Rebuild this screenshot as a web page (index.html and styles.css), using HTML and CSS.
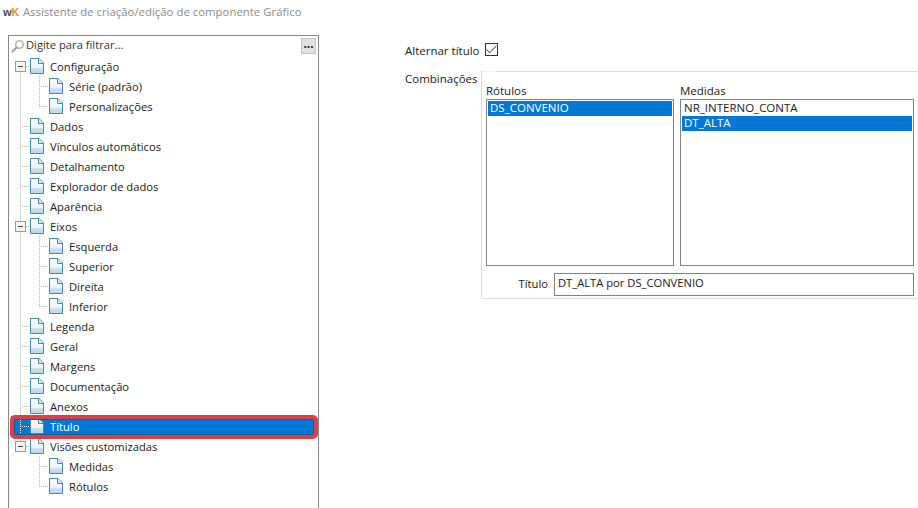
FILE: index.html
```html
<!DOCTYPE html>
<html lang="pt">
<head>
<meta charset="utf-8">
<title>Assistente de criação/edição de componente Gráfico</title>
<link rel="stylesheet" href="styles.css">
</head>
<body>
<svg class="defs" width="0" height="0" aria-hidden="true">
  <defs>
    <linearGradient id="docfill" x1="0" y1="0" x2="0" y2="1">
      <stop offset="0" stop-color="#ffffff"/>
      <stop offset="0.6" stop-color="#eaf4f9"/>
      <stop offset="0.68" stop-color="#c9dfeb"/>
      <stop offset="1" stop-color="#bcd7e6"/>
    </linearGradient>
    <symbol id="doc" viewBox="0 0 14 16">
      <path d="M.5.5H9L13.5 5V15.5H.5Z" fill="url(#docfill)" stroke="#3f8cab"/>
      <path d="M8.5 1V5.5H13" fill="#ddebf2" stroke="#3f8cab"/>
    </symbol>
  </defs>
</svg>
<header class="titlebar">
  <span class="logo"><b class="logo-w">w</b><b class="logo-k">K</b></span>
  <span class="title">Assistente de criação/edição de componente Gráfico</span>
</header>
<main class="content">
  <aside class="tree-panel">
    <div class="filter">
      <svg class="search" width="14" height="14" viewBox="0 0 14 14"><circle cx="8.5" cy="5.5" r="3.8" fill="none" stroke="#b4b4b4" stroke-width="1.6"/><path d="M5.6 8.4 1.5 12.5" stroke="#a8a8a8" stroke-width="2.2" stroke-linecap="round"/></svg>
      <span class="filter-text">Digite para filtrar...</span>
      <button class="more" type="button">...</button>
    </div>
    <ul class="tree">
      <li><div class="node"><i class="exp"></i><svg class="doc"><use href="#doc"/></svg><span>Configuração</span></div>
        <ul class="sub">
          <li><div class="node"><svg class="doc"><use href="#doc"/></svg><span>Série (padrão)</span></div></li>
          <li><div class="node"><svg class="doc"><use href="#doc"/></svg><span>Personalizações</span></div></li>
        </ul></li>
      <li><div class="node"><svg class="doc"><use href="#doc"/></svg><span>Dados</span></div></li>
      <li><div class="node"><svg class="doc"><use href="#doc"/></svg><span>Vínculos automáticos</span></div></li>
      <li><div class="node"><svg class="doc"><use href="#doc"/></svg><span>Detalhamento</span></div></li>
      <li><div class="node"><svg class="doc"><use href="#doc"/></svg><span>Explorador de dados</span></div></li>
      <li><div class="node"><svg class="doc"><use href="#doc"/></svg><span>Aparência</span></div></li>
      <li><div class="node"><i class="exp"></i><svg class="doc"><use href="#doc"/></svg><span>Eixos</span></div>
        <ul class="sub">
          <li><div class="node"><svg class="doc"><use href="#doc"/></svg><span>Esquerda</span></div></li>
          <li><div class="node"><svg class="doc"><use href="#doc"/></svg><span>Superior</span></div></li>
          <li><div class="node"><svg class="doc"><use href="#doc"/></svg><span>Direita</span></div></li>
          <li><div class="node"><svg class="doc"><use href="#doc"/></svg><span>Inferior</span></div></li>
        </ul></li>
      <li><div class="node"><svg class="doc"><use href="#doc"/></svg><span>Legenda</span></div></li>
      <li><div class="node"><svg class="doc"><use href="#doc"/></svg><span>Geral</span></div></li>
      <li><div class="node"><svg class="doc"><use href="#doc"/></svg><span>Margens</span></div></li>
      <li><div class="node"><svg class="doc"><use href="#doc"/></svg><span>Documentação</span></div></li>
      <li><div class="node"><svg class="doc"><use href="#doc"/></svg><span>Anexos</span></div></li>
      <li class="selected"><div class="node"><svg class="doc"><use href="#doc"/></svg><span>Título</span></div><div class="callout"></div></li>
      <li><div class="node"><i class="exp"></i><svg class="doc"><use href="#doc"/></svg><span>Visões customizadas</span></div>
        <ul class="sub">
          <li><div class="node"><svg class="doc"><use href="#doc"/></svg><span>Medidas</span></div></li>
          <li><div class="node"><svg class="doc"><use href="#doc"/></svg><span>Rótulos</span></div></li>
        </ul></li>
    </ul>
  </aside>
  <section class="form">
    <div class="toggle-row">
      <span class="label">Alternar título</span>
      <span class="check"><svg width="11" height="9" viewBox="0 0 11 9"><path d="M.7 4.5 3.8 7.8 10.3 .8" fill="none" stroke="#333" stroke-width="1"/></svg></span>
    </div>
    <div class="combo-row">
      <span class="label combo-label">Combinações</span>
      <div class="group">
        <div class="lists">
          <div class="list-col rotulos">
            <div class="list-title">Rótulos</div>
            <div class="listbox"><div class="item sel">DS_CONVENIO</div></div>
          </div>
          <div class="list-col medidas">
            <div class="list-title">Medidas</div>
            <div class="listbox"><div class="item">NR_INTERNO_CONTA</div><div class="item sel">DT_ALTA</div></div>
          </div>
        </div>
        <div class="title-row">
          <span class="label">Título</span>
          <div class="input">DT_ALTA por DS_CONVENIO</div>
        </div>
      </div>
    </div>
  </section>
</main>
</body>
</html>
```
FILE: styles.css
```css
* { box-sizing: border-box; }
html, body { margin: 0; height: 100%; }
body {
  width: 918px; height: 508px; overflow: hidden; background: #fff;
  font-family: "Open Sans", "Noto Sans", sans-serif; font-size: 11.2px; color: #1a1a1a;
  display: flex; flex-direction: column;
}
.defs { position: absolute; }
.titlebar { height: 35px; padding: 4px 0 0 3px; display: flex; align-items: flex-start; gap: 4px; flex: none; line-height: 16px; }
.logo { font-size: 11px; letter-spacing: -.3px; font-family: "Liberation Sans", sans-serif; }
.logo-w { color: #4a4a4a; }
.logo-k { color: #e8892c; }
.title { color: #8c8c8c; font-size: 11.4px; }
.content { flex: 1; display: flex; min-height: 0; }
.tree-panel { width: 311px; margin-left: 8px; border: 1px solid #828790; border-bottom: 0; flex: none; }
.filter { height: 20px; display: flex; align-items: flex-start; padding: 2px 2px 0 2px; }
.search { margin-right: 1px; margin-top: 1px; }
.filter-text { flex: 1; color: #333; line-height: 14px; }
.more { width: 15px; height: 16px; padding: 0 0 5px; border: 1px solid #c4c4c4; background: #e2e2e2; font: 700 12px/10px "Liberation Sans", sans-serif; color: #1d2433; }
.tree, .sub { list-style: none; margin: 0; padding: 0; }
.tree li { position: relative; }
.tree > li::before, .sub > li::before {
  content: ""; position: absolute; top: 0; bottom: 0; left: 11px; width: 1px;
  background: repeating-linear-gradient(#b5b5b5 0 1px, transparent 1px 2px);
}
.sub > li::before { left: 30px; }
.tree > li:last-child::before, .sub > li:last-child::before { bottom: auto; height: 10px; }
.tree > li:first-child::before { top: 10px; }
.node { position: relative; height: 20px; display: flex; align-items: center; padding-left: 21px; white-space: nowrap; }
.sub .node { padding-left: 40px; }
.node::before {
  content: ""; position: absolute; left: 11px; top: 10px; width: 10px; height: 1px;
  background: repeating-linear-gradient(90deg, #b5b5b5 0 1px, transparent 1px 2px);
}
.sub .node::before { left: 30px; }
.doc { width: 14px; height: 16px; flex: none; margin-right: 6px; position: relative; }
.exp { position: absolute; z-index: 1; left: 6px; top: 5px; width: 11px; height: 11px; border: 1px solid #9a9a9a; background: #f4f4f4; }
.exp::after { content: ""; position: absolute; left: 2px; top: 4px; width: 5px; height: 1px; background: #444; }
.selected .node { background: #0078d7; color: #fff; margin: 0 2px 0 2px; padding-left: 19px; }
.selected .node::before { left: 9px; background: repeating-linear-gradient(90deg, #fff 0 1px, transparent 1px 2px); }
.selected .node::after {
  content: ""; position: absolute; left: 9px; top: 0; bottom: 0; width: 1px;
  background: repeating-linear-gradient(#fff 0 1px, transparent 1px 2px);
}
.callout { position: absolute; left: 1px; right: 0; top: -1px; height: 24px; border: 4px solid #d8404a; border-radius: 5px; z-index: 2; box-shadow: inset 0 0 0 1px #1d5a94; }
.form { flex: 1; padding: 8px 0 0 86px; min-width: 0; font-size: 11.5px; }
.toggle-row { display: flex; align-items: center; gap: 5px; height: 14px; }
.check { width: 13px; height: 13px; border: 1px solid #333; display: flex; align-items: center; justify-content: center; margin-top: -1px; }
.combo-row { display: flex; margin-top: 14px; }
.label { white-space: nowrap; }
.combo-label { width: 76px; flex: none; line-height: 16px; }
.group { position: relative; flex: 1; height: 228px; border: 1px solid #dcdcdc; border-right: 0; padding: 12px 4px 0 4px; }
.group::before { content: ""; position: absolute; left: 2px; top: -1px; width: 12px; height: 1px; background: #f4f4f4; }
.lists { display: flex; gap: 6px; height: 182px; }
.list-col { display: flex; flex-direction: column; }
.rotulos { width: 188px; }
.medidas { flex: 1; }
.list-title { height: 15px; line-height: 14px; }
.listbox { flex: 1; border: 1px solid #828282; padding: 1px; }
.item { height: 15px; line-height: 14px; padding-left: 2px; }
.item.sel { background: #0078d7; color: #fff; }
.title-row { display: flex; align-items: center; margin-top: 7px; }
.title-row .label { width: 68px; text-align: right; padding-right: 6px; flex: none; line-height: 14px; padding-bottom: 2px; font-size: 11.2px; }
.input { flex: 1; height: 23px; border: 1px solid #828282; padding-left: 3px; line-height: 18px; font-size: 11.2px; }
```
